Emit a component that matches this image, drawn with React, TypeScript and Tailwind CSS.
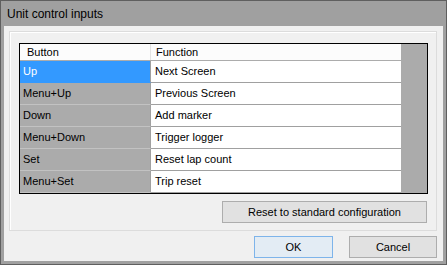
export default function App() {
  const rows: [string, string][] = [
    ["Up", "Next Screen"],
    ["Menu+Up", "Previous Screen"],
    ["Down", "Add marker"],
    ["Menu+Down", "Trigger logger"],
    ["Set", "Reset lap count"],
    ["Menu+Set", "Trip reset"],
  ];
  return (
    <div className="w-[447px] h-[265px] border border-[#5f5f5f] bg-[#a0a0a0] flex flex-col font-['Liberation_Sans',Arial,sans-serif] text-black">
      <div className="h-[25px] shrink-0 flex items-center pl-[6px] text-[12px]">Unit control inputs</div>
      <div className="mx-[3px] h-[235px] shrink-0 bg-[#f0f0f0] flex flex-col">
        <div className="ml-[5px] mt-[5px] w-[428px] h-[200px] border border-[#dcdcdc] shadow-[inset_1px_1px_0_#ffffff] flex flex-col">
          <div className="ml-[9px] mt-[11px] w-[409px] h-[151px] border border-black bg-[#ababab] flex flex-col text-[11px]">
            <div className="flex h-[17px] w-[381px] bg-[#fcfcfc] border-b border-[#acacac]">
              <div className="w-[131px] border-r border-[#e3e3e3] pl-[7px] flex items-center">Button</div>
              <div className="w-[250px] pl-[5px] flex items-center">Function</div>
            </div>
            {rows.map(([b, f], i) => (
              <div key={b} className="flex h-[22px] w-[381px]">
                <div
                  className={
                    i === 0
                      ? "w-[131px] border-r border-[#a0a0a0] border-b border-b-[#3399ff] bg-[#3399ff] text-white pl-[3px] flex items-center"
                      : "w-[131px] border-r border-[#a0a0a0] border-b border-b-[#c2c2c2] bg-[#ababab] pl-[3px] flex items-center"
                  }
                >
                  {b}
                </div>
                <div className="w-[250px] bg-white border-b border-[#a0a0a0] pl-[4px] flex items-center">{f}</div>
              </div>
            ))}
          </div>
          <button className="self-end mr-[9px] mt-[7px] w-[205px] h-[22px] bg-[#e1e1e1] border border-[#adadad] text-[11px] flex items-center justify-center">
            Reset to standard configuration
          </button>
        </div>
        <div className="flex justify-end pr-[6px] mt-[5px] gap-[16px]">
          <button className="w-[79px] h-[22px] bg-[#e3ecf4] border border-[#7eb4ea] text-[11px] flex items-center justify-center">
            OK
          </button>
          <button className="w-[88px] h-[22px] bg-[#e1e1e1] border border-[#adadad] text-[11px] flex items-center justify-center">
            Cancel
          </button>
        </div>
      </div>
    </div>
  );
}
